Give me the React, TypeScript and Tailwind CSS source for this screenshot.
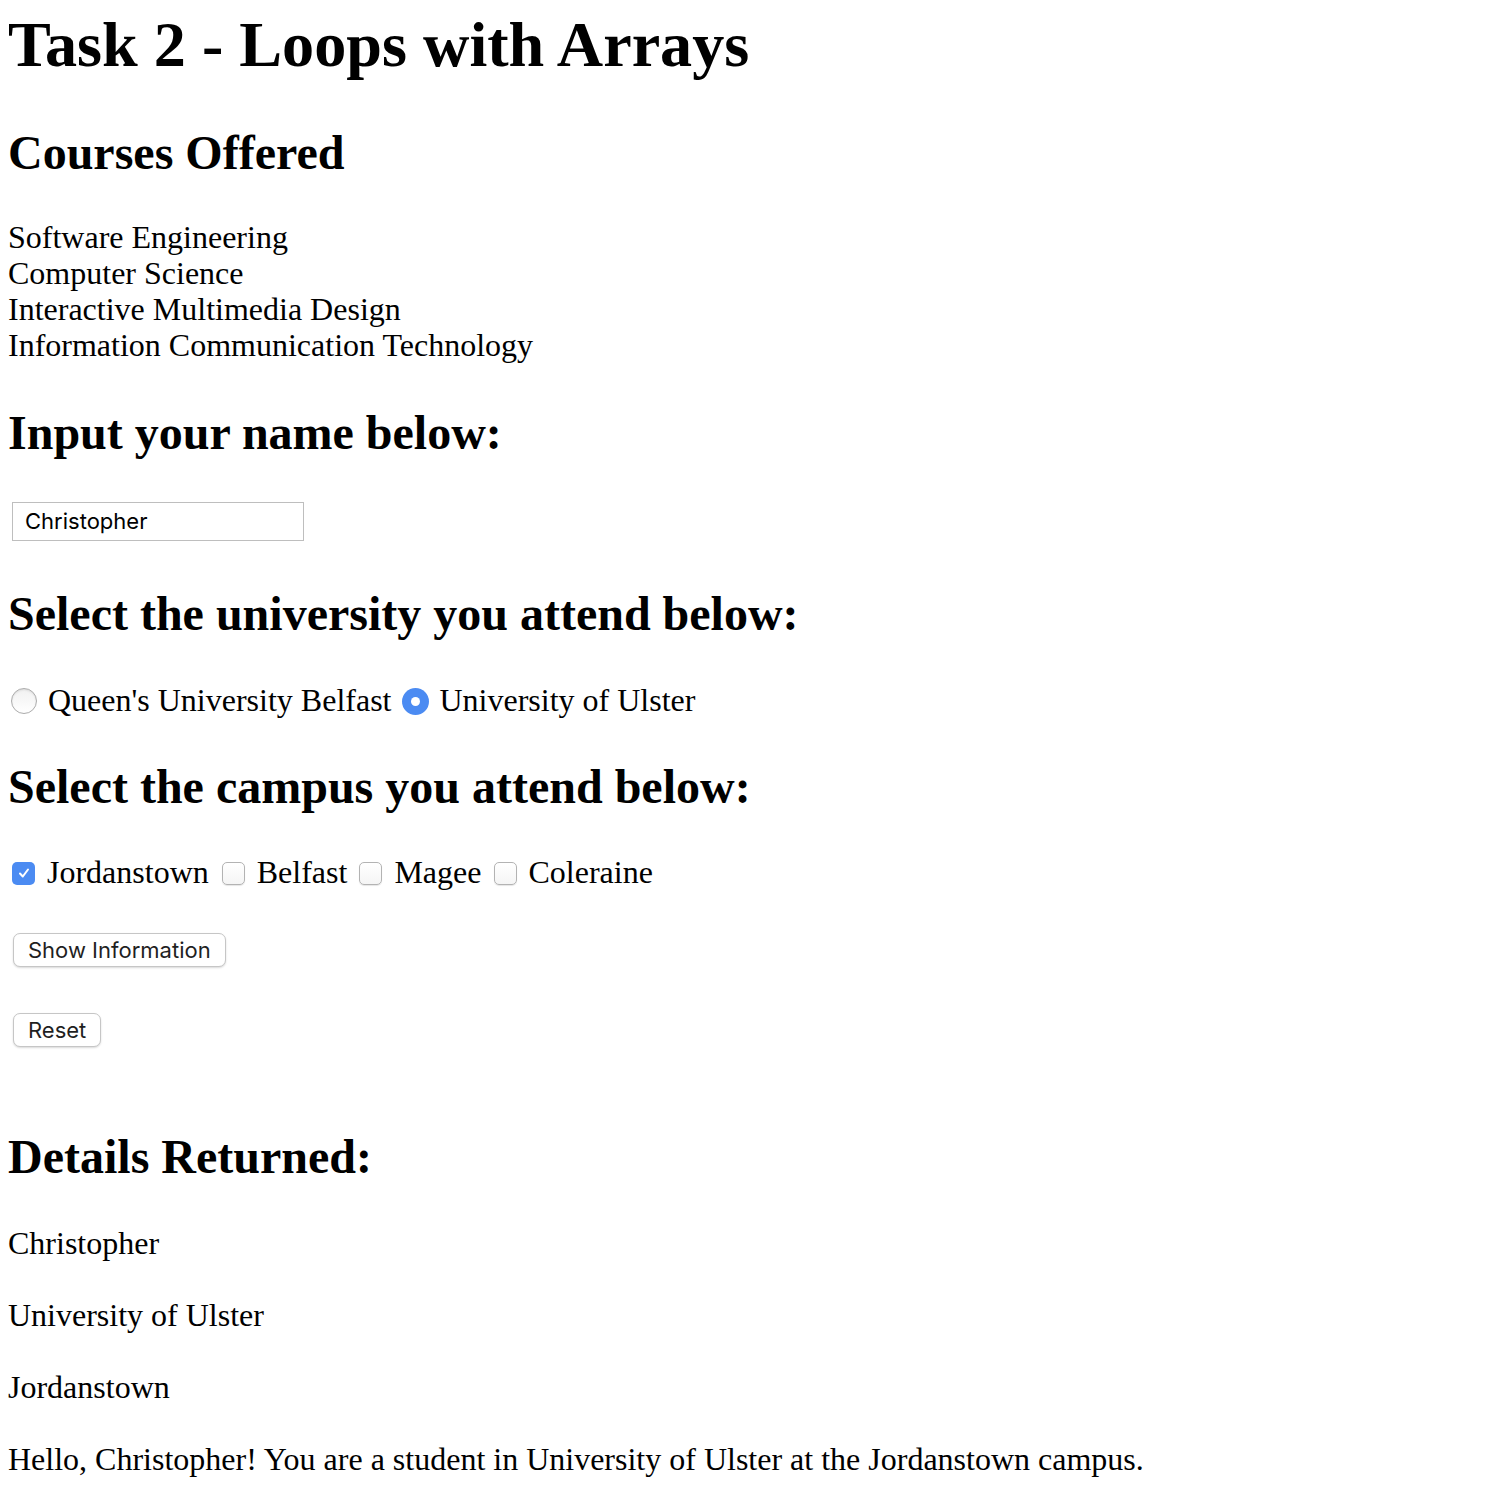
import React from "react";

const serif = "font-['Liberation_Serif','Times_New_Roman',serif]";
const ui = "font-['Inter','Liberation_Sans',sans-serif]";

const courses = [
  "Software Engineering",
  "Computer Science",
  "Interactive Multimedia Design",
  "Information Communication Technology",
];

function Radio({ checked }: { checked?: boolean }) {
  if (checked) {
    return (
      <span className="flex h-[27px] w-[27px] shrink-0 items-center justify-center rounded-full bg-[#4b8bf2]">
        <span className="h-[9px] w-[9px] rounded-full bg-white" />
      </span>
    );
  }
  return (
    <span className="block h-[26px] w-[26px] shrink-0 rounded-full border border-[#acacac] bg-gradient-to-b from-[#f1f1f1] to-white shadow-[inset_0_1px_2px_rgba(0,0,0,0.1)]" />
  );
}

function Checkbox({ checked }: { checked?: boolean }) {
  if (checked) {
    return (
      <span className="flex h-[23px] w-[23px] shrink-0 items-center justify-center rounded-[5px] bg-[#4b8bf2]">
        <svg width="14" height="14" viewBox="0 0 14 14" fill="none">
          <path d="M3 7.5l2.8 3L11 3.5" stroke="white" strokeWidth="2" strokeLinecap="round" strokeLinejoin="round" />
        </svg>
      </span>
    );
  }
  return (
    <span className="block h-[23px] w-[23px] shrink-0 rounded-[5px] border border-[#b3b3b3] bg-gradient-to-b from-white to-[#f5f5f5] shadow-[0_1px_1px_rgba(0,0,0,0.1)]" />
  );
}

function Button({ label, className }: { label: string; className?: string }) {
  return (
    <div className={className}>
      <button
        className={`${ui} ml-[5px] h-[34px] rounded-[7px] border border-[#c6c6c6] bg-white px-[14px] text-[22px] leading-[32px] text-[#1f1f1f] shadow-[0_1px_2px_rgba(0,0,0,0.15)]`}
      >
        {label}
      </button>
    </div>
  );
}

export default function App() {
  const h2 = `text-[48px] leading-[55px] font-bold`;
  return (
    <div className={`${serif} min-h-[1508px] bg-white px-[8px] pt-[9px] text-black`}>
      <h1 className="text-[64.2px] leading-[72px] font-bold">Task 2 - Loops with Arrays</h1>

      <h2 className={`${h2} mt-[44px]`}>Courses Offered</h2>
      <div className="mt-[39px] text-[32px] leading-[36px]">
        {courses.map((c) => (
          <div key={c}>{c}</div>
        ))}
      </div>

      <h2 className={`${h2} mt-[42px]`}>Input your name below:</h2>
      <div className="mt-[42px] ml-[4px] flex h-[39px] w-[292px] items-center border border-[#bebebe] px-[12px]">
        <span className={`${ui} text-[22px] text-black`}>Christopher</span>
      </div>

      <h2 className={`${h2} mt-[45px]`}>Select the university you attend below:</h2>
      <div className="mt-[41px] flex items-center text-[32px] leading-[36px]">
        <span className="ml-[3px] flex items-center pt-[2px]">
          <Radio />
        </span>
        <span className="ml-[11px]">Queen's University Belfast</span>
        <span className="ml-[11px] flex items-center pt-[2px]">
          <Radio checked />
        </span>
        <span className="ml-[10px]">University of Ulster</span>
      </div>

      <h2 className={`${h2} mt-[41px]`}>Select the campus you attend below:</h2>
      <div className="mt-[40px] flex items-center text-[32px] leading-[36px]">
        <span className="ml-[4px] flex items-center pt-[2px]">
          <Checkbox checked />
        </span>
        <span className="ml-[12px]">Jordanstown</span>
        <span className="ml-[13px] flex items-center pt-[2px]">
          <Checkbox />
        </span>
        <span className="ml-[12px]">Belfast</span>
        <span className="ml-[12px] flex items-center pt-[2px]">
          <Checkbox />
        </span>
        <span className="ml-[12px]">Magee</span>
        <span className="ml-[13px] flex items-center pt-[2px]">
          <Checkbox />
        </span>
        <span className="ml-[11px]">Coleraine</span>
      </div>

      <Button label="Show Information" className="mt-[43px]" />
      <Button label="Reset" className="mt-[46px]" />

      <h2 className={`${h2} mt-[82px]`}>Details Returned:</h2>
      <div className="mt-[41px] flex flex-col gap-[36px] text-[32px] leading-[36px]">
        <p>Christopher</p>
        <p>University of Ulster</p>
        <p>Jordanstown</p>
        <p>Hello, Christopher! You are a student in University of Ulster at the Jordanstown campus.</p>
      </div>
    </div>
  );
}
